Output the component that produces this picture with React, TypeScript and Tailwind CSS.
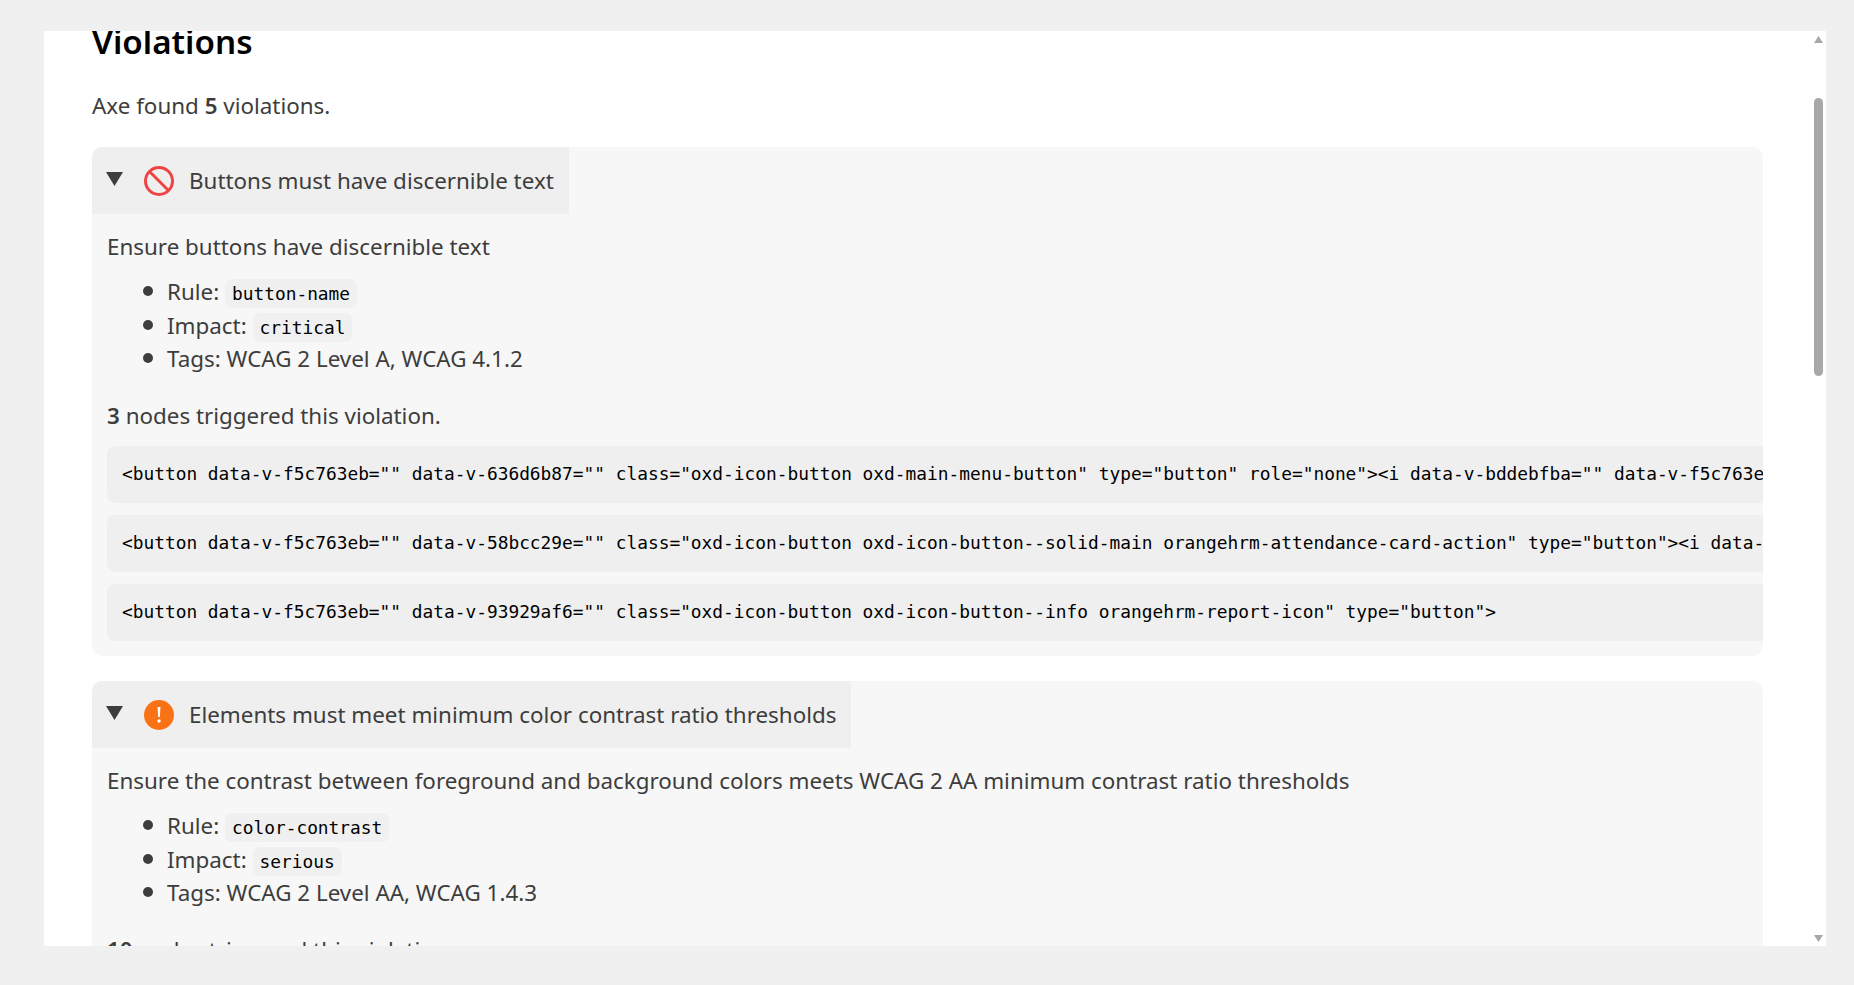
import React from "react";

interface Violation {
  title: string;
  description: string;
  rule: string;
  impact: string;
  tags: string;
  count: number;
  icon: "critical" | "serious";
  nodes: string[];
}

const violations: Violation[] = [
  {
    title: "Buttons must have discernible text",
    description: "Ensure buttons have discernible text",
    rule: "button-name",
    impact: "critical",
    tags: "WCAG 2 Level A, WCAG 4.1.2",
    count: 3,
    icon: "critical",
    nodes: [
      '<button data-v-f5c763eb="" data-v-636d6b87="" class="oxd-icon-button oxd-main-menu-button" type="button" role="none"><i data-v-bddebfba="" data-v-f5c763eb="" class="oxd-icon bi-list"></i></button>',
      '<button data-v-f5c763eb="" data-v-58bcc29e="" class="oxd-icon-button oxd-icon-button--solid-main orangehrm-attendance-card-action" type="button"><i data-v-bddebfba="" class="oxd-icon"></i></button>',
      '<button data-v-f5c763eb="" data-v-93929af6="" class="oxd-icon-button oxd-icon-button--info orangehrm-report-icon" type="button">',
    ],
  },
  {
    title: "Elements must meet minimum color contrast ratio thresholds",
    description:
      "Ensure the contrast between foreground and background colors meets WCAG 2 AA minimum contrast ratio thresholds",
    rule: "color-contrast",
    impact: "serious",
    tags: "WCAG 2 Level AA, WCAG 1.4.3",
    count: 10,
    icon: "serious",
    nodes: [],
  },
];

const SeverityIcon = ({ kind }: { kind: Violation["icon"] }) =>
  kind === "critical" ? (
    <svg width="30" height="30" viewBox="0 0 30 30" fill="none" stroke="#ef4444" strokeWidth="3">
      <circle cx="15" cy="15" r="13.5" />
      <path d="M5.5 5.5L24.5 24.5" />
    </svg>
  ) : (
    <svg width="30" height="30" viewBox="0 0 30 30">
      <circle cx="15" cy="15" r="15" fill="#f97316" />
      <path d="M13.6 7h2.8l-.5 10h-1.8z" fill="#fff" />
      <circle cx="15" cy="21" r="1.7" fill="#fff" />
    </svg>
  );

const Code = ({ children }: { children: React.ReactNode }) => (
  <code className="rounded-[7px] bg-[#f0f0f0] px-[7px] py-[4px] font-['DejaVu_Sans_Mono',monospace] text-[17.83px] leading-none text-black">
    {children}
  </code>
);

const Bullet = ({ children }: { children: React.ReactNode }) => (
  <li className="relative before:absolute before:-left-[24px] before:top-[11px] before:size-[10px] before:rounded-full before:bg-[#3d3d3d] before:content-['']">
    {children}
  </li>
);

const ViolationCard = ({ v }: { v: Violation }) => (
  <div className="mb-[25px] overflow-hidden rounded-[10px] bg-[#f7f7f7]">
    <div className="flex h-[67px] w-fit items-center bg-[#efefef] pl-[14px] pr-[15px] pt-[2px]">
      <svg width="17" height="14" viewBox="0 0 17 14" className="mb-[5px] mr-[21px]" fill="#3d3d3d">
        <path d="M0 0h17L8.5 14z" />
      </svg>
      <SeverityIcon kind={v.icon} />
      <span className="ml-[15px]">{v.title}</span>
    </div>
    <div className="px-[15px] pb-[15px] pt-[16px]">
      <p>{v.description}</p>
      <ul className="mb-[23px] mt-[12px] pl-[60px]">
        <Bullet>
          Rule: <Code>{v.rule}</Code>
        </Bullet>
        <Bullet>
          Impact: <Code>{v.impact}</Code>
        </Bullet>
        <Bullet>Tags: {v.tags}</Bullet>
      </ul>
      <p className="mb-[13px]">
        <span className="font-semibold">{v.count}</span> nodes triggered this violation.
      </p>
      <div className="-mr-[15px] flex flex-col gap-[12px]">
        {v.nodes.map((node) => (
          <pre
            key={node}
            className="flex h-[57px] items-center overflow-hidden rounded-l-[8px] bg-[#efefef] pl-[15px] font-['DejaVu_Sans_Mono',monospace] text-[17.83px] text-black"
          >
            {node}
          </pre>
        ))}
      </div>
    </div>
  </div>
);

export default function App() {
  return (
    <div className="flex h-[985px] w-[1854px] flex-col overflow-hidden bg-[#f0f0f0] pb-[39px] pl-[44px] pr-[28px] pt-[31px] font-['Noto_Sans',sans-serif] text-[22.4px] leading-[33.6px] text-[#3d3d3d]">
      <div className="flex h-[915px] bg-white">
        <main className="flex-1 overflow-hidden pl-[48px] pr-[51px]">
          <h2 className="-mt-[14px] text-[33.2px] font-semibold leading-[50px] text-black">Violations</h2>
          <p className="mb-[24px] mt-[22px]">
            Axe found <span className="font-semibold">5</span> violations.
          </p>
          {violations.map((v) => (
            <ViolationCard key={v.rule} v={v} />
          ))}
        </main>
        <div className="mr-[3px] flex w-[9px] flex-col items-center pb-[4px] pt-[5px]">
          <svg width="9" height="7" viewBox="0 0 9 7" fill="#a8a8a8">
            <path d="M4.5 0L9 7H0z" />
          </svg>
          <div className="mt-[55px] h-[278px] w-[9px] rounded-full bg-[#a8a8a8]" />
          <svg width="9" height="7" viewBox="0 0 9 7" fill="#a8a8a8" className="mt-auto">
            <path d="M0 0h9L4.5 7z" />
          </svg>
        </div>
      </div>
    </div>
  );
}
